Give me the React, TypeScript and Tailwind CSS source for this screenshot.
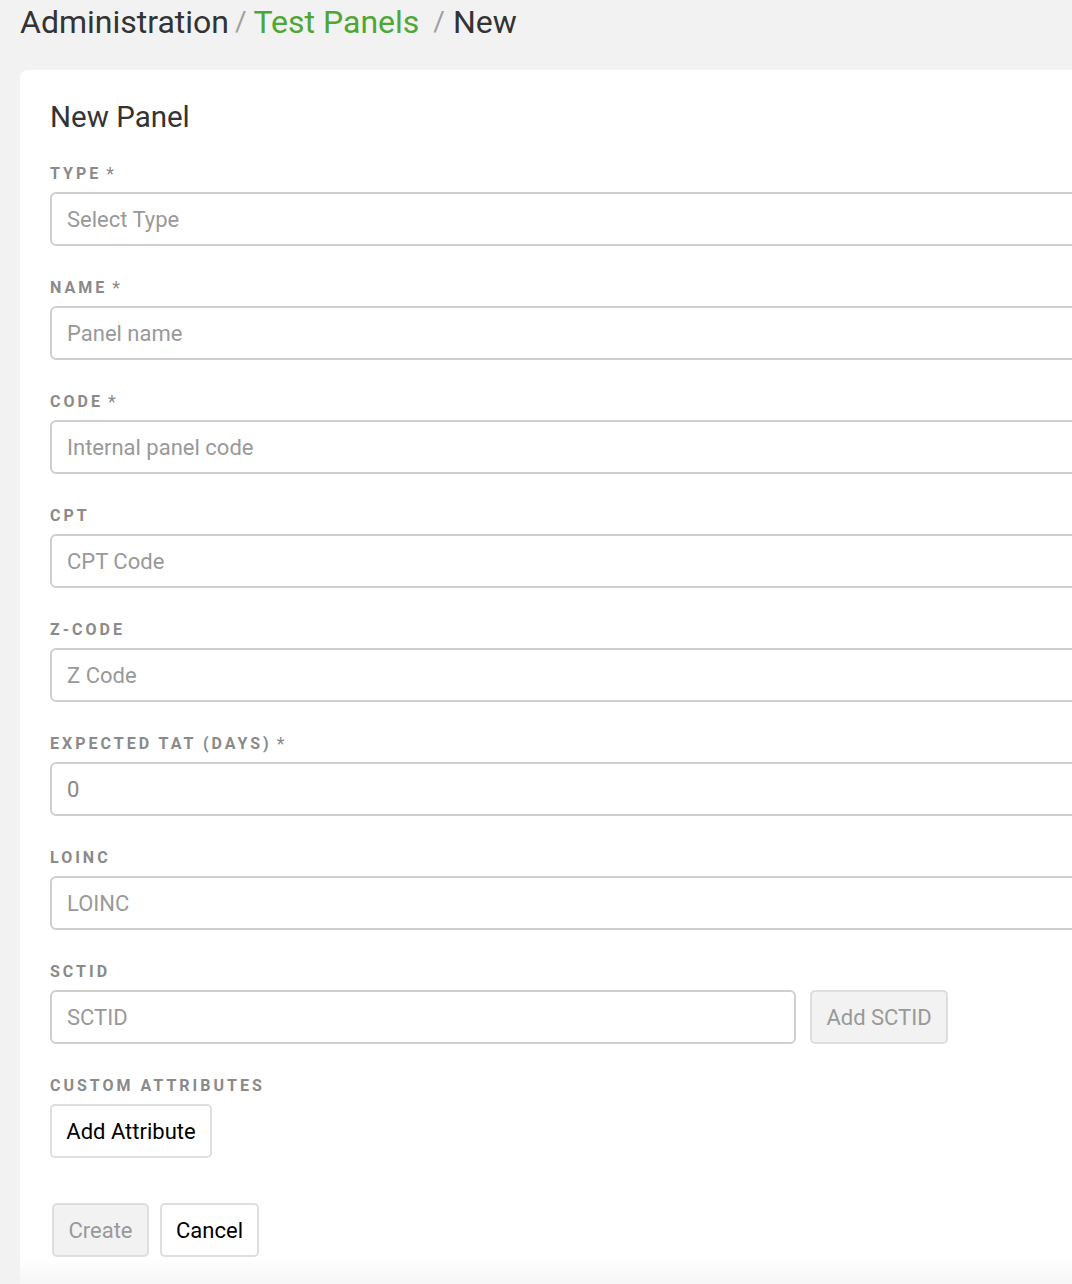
import React from 'react';

type Field = {
  label: string;
  required?: boolean;
  placeholder?: string;
  value?: string;
};

const fields: Field[] = [
  { label: 'Type', required: true, placeholder: 'Select Type' },
  { label: 'Name', required: true, placeholder: 'Panel name' },
  { label: 'Code', required: true, placeholder: 'Internal panel code' },
  { label: 'CPT', placeholder: 'CPT Code' },
  { label: 'Z-Code', placeholder: 'Z Code' },
  { label: 'Expected TAT (days)', required: true, value: '0' },
  { label: 'LOINC', placeholder: 'LOINC' },
];

function Label({ text, required }: { text: string; required?: boolean }) {
  return (
    <div className="mb-2 flex h-5 items-center text-[16px] leading-5 font-bold tracking-[3px] text-[#8a8a8a] uppercase">
      <span>{text}</span>
      {required && (
        <span className="ml-[5px] text-[18px] font-normal tracking-normal text-[#8a8a8a]">*</span>
      )}
    </div>
  );
}

const inputClass =
  'h-[54px] w-full rounded-[6px] border-2 border-[#cfcfcf] bg-white px-[15px] text-[22px] text-[#888] outline-none placeholder:text-[#999]';

export default function App() {
  return (
    <div className="min-h-[1284px] w-[1072px] overflow-hidden bg-[#f2f2f2] font-['Roboto',sans-serif]">
      {/* breadcrumb */}
      <div className="flex h-[41px] items-center pt-[3px] pl-5 text-[32px] leading-10 text-[#333]">
        <span>Administration</span>
        <span className="mr-[7px] ml-[6px] text-[28px] text-[#a0a0a0]">/</span>
        <span className="text-[#4ea635]">Test Panels</span>
        <span className="mr-[8px] ml-[14px] text-[28px] text-[#a0a0a0]">/</span>
        <span>New</span>
      </div>

      <div className="mt-[29px] ml-5 w-[1120px] rounded-[8px] bg-white pt-[29px] pr-[30px] pl-[30px]">
        <h1 className="mb-[29px] text-[29.5px] leading-9 font-normal text-[#333]">New Panel</h1>

        {fields.map((f) => (
          <div key={f.label} className="mb-8">
            <Label text={f.label} required={f.required} />
            {f.value !== undefined ? (
              <input className={inputClass} defaultValue={f.value} />
            ) : (
              <input className={inputClass} placeholder={f.placeholder} />
            )}
          </div>
        ))}

        <div className="mb-8">
          <Label text="SCTID" />
          <div className="flex gap-[14px]">
            <input className={inputClass + ' !w-[746px]'} placeholder="SCTID" />
            <button className="h-[54px] w-[138px] rounded-[5px] border-2 border-[#dedede] bg-[#f2f2f2] text-[22px] text-[#999]">
              Add SCTID
            </button>
          </div>
        </div>

        <div>
          <div className="mb-2 flex h-5 items-center text-[16px] leading-5 font-bold tracking-[3px] text-[#8a8a8a] uppercase">
            Custom Attributes
          </div>
          <button className="h-[54px] w-[162px] rounded-[5px] border-2 border-[#dedede] bg-white text-[22px] text-black">
            Add Attribute
          </button>
        </div>

        <div className="mt-[45px] flex gap-[11px] pl-[2px]">
          <button className="h-[54px] w-[97px] rounded-[5px] border-2 border-[#dedede] bg-[#f2f2f2] text-[22px] text-[#999]">
            Create
          </button>
          <button className="h-[54px] w-[99px] rounded-[5px] border-2 border-[#dedede] bg-white text-[22px] text-black">
            Cancel
          </button>
        </div>

        <div className="-mx-[30px] h-[30px] bg-gradient-to-b from-white to-[#f5f5f5]" />
      </div>
    </div>
  );
}
